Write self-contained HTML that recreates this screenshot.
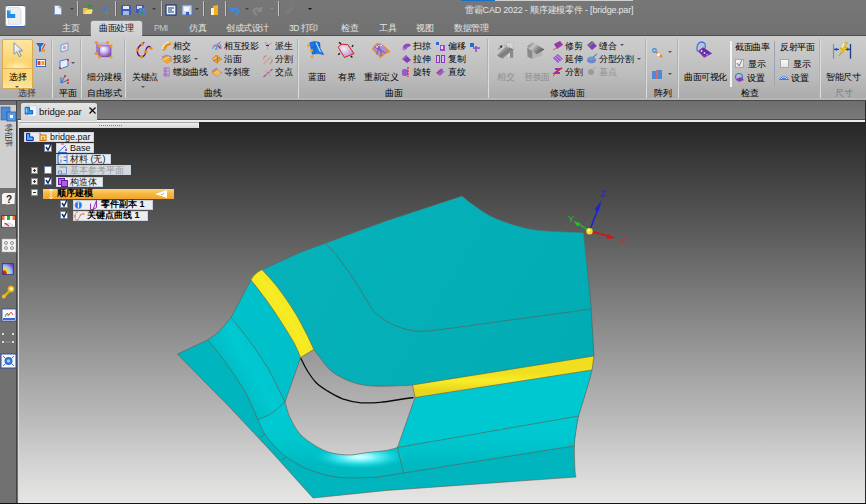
<!DOCTYPE html>
<html><head><meta charset="utf-8">
<style>
*{margin:0;padding:0;box-sizing:border-box}
html,body{width:866px;height:504px;overflow:hidden;background:#6e6e6e;font-family:"Liberation Sans",sans-serif}
.a{position:absolute}
svg{position:absolute;overflow:visible}
#title{left:0;top:0;width:866px;height:35px;background:linear-gradient(#777777,#717171)}
#ribbon{left:0;top:35px;width:866px;height:66px;background:linear-gradient(#cdcdcd,#c8c8c8 22%,#bcbcbc 62%,#acacac 96%,#b8b8b8 98%,#b8b8b8);border-top:1px solid #4e4e4e;border-bottom:1px solid #4a4a4a}
.tab{top:22px;font-size:8.5px;letter-spacing:-0.5px;color:#e4e4e4;line-height:12px;white-space:nowrap}
#seltab{left:90px;top:20px;width:53px;height:16px;background:linear-gradient(#dadada,#cfcfcf);border-radius:3px 3px 0 0;border:1px solid #858585;border-bottom:none}
.gl{top:88px;font-size:8.5px;letter-spacing:-0.5px;color:#3a3a3a;line-height:12px;white-space:nowrap}
.sep{top:39px;width:1px;height:59px;background:#b0b0b0;box-shadow:1px 0 0 #dcdcdc}
.t{font-size:8.5px;letter-spacing:-0.5px;color:#000;line-height:11px;white-space:nowrap;position:absolute}
.g{color:#8e8e8e}
.dd{position:absolute;width:0;height:0;border-left:2.5px solid transparent;border-right:2.5px solid transparent;border-top:2.5px solid #555}
.qs{position:absolute;top:1px;width:1px;height:15px;background:#c4c4c4;box-shadow:1px 0 0 rgba(90,90,90,0.5)}
#strip{left:0;top:101px;width:866px;height:18px;background:linear-gradient(#6e6e6e,#7a7a7a)}
#vp{left:18px;top:122px;width:847px;height:381px;background:linear-gradient(#262626 0%,#393939 10%,#585858 27%,#7a7a7a 45%,#9b9b9b 62%,#bcbcbc 79%,#d4d4d4 90%,#e6e6e4 100%)}
#ltb{left:0;top:101px;width:17px;height:402px;background:#717171;border-right:1px solid #444}
.ti{position:absolute;height:10px;background:rgba(250,252,255,0.92);border:1px solid #c8d2dc;font-size:8.5px;line-height:9px;color:#111;white-space:nowrap}
.cb{position:absolute;width:8px;height:8px;background:#fff;border:1px solid #6d84a8}
.pm{position:absolute;width:7px;height:7px;background:#f2f2f2;border:1px solid #8a8a8a}
</style></head><body>
<div id="title" class="a"></div>
<div class="a" style="left:461px;top:0;width:34px;height:1px;background:#1a72c8"></div><div class="a" style="left:495px;top:0;width:138px;height:1px;background:#d0d0d0"></div>
<!-- app button -->
<div class="a" style="left:5px;top:5px;width:21px;height:22px;background:#fff;border-radius:3px;border-top:1px solid #3a62b4;border-bottom:1px solid #3a62b4;border-left:1px solid #8aa0cc;border-right:1px solid #8aa0cc"></div>
<svg style="left:7px;top:7px" width="16" height="18"><path d="M1.3,0.5 h10.5 l2.2,2.2 v14.6 h-12.7 z" fill="#eceef4" stroke="#c8ccd6" stroke-width="0.6"/><path d="M0,3 h3.5 v4 h4.7 v4 H0 z" fill="#1a8ee8"/><path d="M0.5,3.5 h2.5 v3" fill="none" stroke="#9ad4ff" stroke-width="0.8"/></svg>
<!-- QAT -->
<svg style="left:54px;top:5px" width="8" height="10"><path d="M0.5,0.5 h4.5 l2.5,2.5 v6.5 h-7 z" fill="#eef3fc" stroke="#7a92c4" stroke-width="0.8"/><path d="M5,0.5 v2.5 h2.5" fill="#c8d4ec" stroke="#7a92c4" stroke-width="0.6"/></svg>
<div class="dd" style="left:70px;top:8px;border-left-width:2px;border-right-width:2px;border-top:2px solid #404040"></div>
<div class="qs" style="left:77px"></div>
<svg style="left:83px;top:4px" width="10" height="11"><path d="M0 4h4l1 1h4v5H0z" fill="#e8c040"/><path d="M1 10l2-4h7l-2 4z" fill="#f8e070"/><path d="M5 3q2-3 4 0" stroke="#2a9a2a" stroke-width="2" fill="none"/></svg>
<svg style="left:101px;top:6px" width="8" height="8"><circle cx="4" cy="3.5" r="2.5" fill="#4a7ac0"/><path d="M4 6l3 2" stroke="#888" stroke-width="1"/></svg>
<div class="qs" style="left:115px"></div>
<svg style="left:121px;top:5px" width="10" height="10"><rect x="0" y="0" width="10" height="10" rx="1" fill="#3a5ab8"/><rect x="2" y="1" width="6" height="3" fill="#e0e8f8"/><rect x="2" y="6" width="6" height="4" fill="#a8b8d8"/></svg>
<svg style="left:136px;top:5px" width="10" height="10"><rect x="0" y="0" width="8" height="8" fill="#3a5ab8"/><rect x="1" y="1" width="5" height="3" fill="#d0dcf0"/><rect x="3" y="3" width="7" height="7" fill="#5a7ac8"/><path d="M4 8l3-2v4z" fill="#2a9a2a"/></svg>
<div class="dd" style="left:152px;top:8px;border-top-color:#3a3a3a"></div>
<div class="qs" style="left:161px"></div>
<svg style="left:166px;top:5px" width="10" height="10"><rect x="0" y="0" width="10" height="10" fill="#f0f4fa" stroke="#1a3a7a" stroke-width="1.2"/><path d="M2 3h6M2 5h4M2 7h6" stroke="#1a3a7a" stroke-width="1"/></svg>
<svg style="left:182px;top:5px" width="10" height="10"><rect x="0" y="0" width="10" height="10" fill="#c8d8f0" stroke="#5a7ab8" stroke-width="1"/><rect x="2" y="2" width="5" height="4" fill="#f8f8f8"/><rect x="4" y="7" width="3" height="3" fill="#3a5ab8"/></svg>
<div class="dd" style="left:195px;top:8px;border-top-color:#3a3a3a"></div>
<div class="qs" style="left:203px"></div>
<svg style="left:210px;top:5px" width="9" height="10"><path d="M3 1l5-1v10l-5 0z" fill="#f0b020"/><path d="M1 3h3v7H1z" fill="#f8f0d0"/></svg>
<div class="qs" style="left:225px"></div>
<svg style="left:229px;top:5px" width="10" height="10"><path d="M2 2v4h4" stroke="#3a8ae0" stroke-width="2" fill="none"/><path d="M2 6q3-5 7-1q1 3-3 5" stroke="#3a8ae0" stroke-width="2" fill="none"/></svg>
<div class="dd" style="left:245px;top:8px;border-top-color:#444"></div>
<svg style="left:253px;top:5px" width="10" height="10"><path d="M8 2v4h-4" stroke="#8a8a8a" stroke-width="2" fill="none"/><path d="M8 6q-3-5-7-1q-1 3 3 5" stroke="#8a8a8a" stroke-width="2" fill="none"/></svg>
<div class="dd" style="left:270px;top:8px;border-top-color:#8a8a8a"></div>
<div class="qs" style="left:278px"></div>
<svg style="left:284px;top:5px" width="10" height="10"><path d="M2 9l6-8M4 9l5-6" stroke="#7c7c7c" stroke-width="1.5"/></svg>
<div class="dd" style="left:308px;top:8px;border-top-color:#111"></div>
<div class="a" style="left:465px;top:4px;font-size:9px;letter-spacing:-0.2px;color:#e6e6e6;line-height:12px;white-space:nowrap">雷霸CAD 2022 - 顺序建模零件 - [bridge.par]</div>
<!-- tabs -->
<div id="seltab" class="a"></div>
<div class="a tab" style="left:62px">主页</div>
<div class="a tab" style="left:99px;color:#111">曲面处理</div>
<div class="a tab" style="left:154px;color:#c8c8c8">PMI</div>
<div class="a tab" style="left:189px">仿真</div>
<div class="a tab" style="left:226px">创成式设计</div>
<div class="a tab" style="left:289px">3D 打印</div>
<div class="a tab" style="left:341px">检查</div>
<div class="a tab" style="left:379px">工具</div>
<div class="a tab" style="left:416px">视图</div>
<div class="a tab" style="left:454px">数据管理</div>
<div id="ribbon" class="a"></div>
<div class="a" style="left:91px;top:35px;width:51px;height:2px;background:#cecece"></div>
<!-- ribbon content -->
<div class="a" style="left:2px;top:39px;width:31px;height:50px;background:linear-gradient(#fde6a0,#fcd87c 35%,#fbd26a 50%,#fcd878 100%);border:1px solid #d9a94a;border-radius:2px"></div>
<div class="a" style="left:3px;top:52px;width:29px;height:16px;background:radial-gradient(ellipse 14px 8px at 50% 100%,rgba(255,246,200,0.9),rgba(255,240,180,0) 100%)"></div>
<div class="a" style="left:3px;top:69px;width:29px;height:19px;background:linear-gradient(#fcd878,#fcda80 60%,#fde6a2)"></div>
<div class="a" style="left:3px;top:68px;width:29px;height:1px;background:#e2b860"></div>
<svg style="left:13px;top:42px" width="11" height="16"><defs><linearGradient id="arw" x1="0" y1="0" x2="1" y2="1"><stop offset="0" stop-color="#ffffff"/><stop offset="1" stop-color="#c8d4e8"/></linearGradient></defs><path d="M1,0.8 v11.5 l2.8,-2.6 2.4,5 2,-1 -2.4,-4.8 h3.9 z" fill="url(#arw)" stroke="#7888a8" stroke-width="0.9"/></svg>
<div class="t" style="left:9px;top:72px">选择</div>
<div class="dd" style="left:15px;top:86px;border-top-color:#555"></div>
<div class="t gl a" style="left:18px;color:#3a3a3a">选择</div>
<svg style="left:36px;top:43px" width="10" height="10"><path d="M0 0h8l-3 4v4l-2 1V4z" fill="#2a6ac8"/><path d="M5 9l4-8" stroke="#d02020" stroke-width="1"/><rect x="5" y="6" width="4" height="3" fill="#f0a020"/></svg>
<svg style="left:36px;top:59px" width="10" height="8"><rect x="0.5" y="0.5" width="9" height="7" fill="#fff" stroke="#3a6ac8"/><rect x="1.5" y="2" width="3" height="4" fill="#e84030"/><rect x="5.5" y="2" width="3" height="4" fill="#f0a020"/></svg>
<div class="sep a" style="left:51px"></div>
<svg style="left:60px;top:43px" width="9" height="9"><path d="M1 2l7-2v7l-7 2z" fill="#dce8f8" stroke="#5a8ad8" stroke-width="0.8"/><rect x="3" y="3" width="3" height="3" fill="#e8a0a0"/></svg>
<svg style="left:59px;top:59px" width="10" height="10"><path d="M1 2l8-2v7l-8 3z" fill="#e8eef8" stroke="#4a7ad0" stroke-width="1"/><circle cx="1" cy="9" r="1" fill="#e02020"/><circle cx="9" cy="1" r="1" fill="#e02020"/></svg>
<div class="dd" style="left:71px;top:62px"></div>
<svg style="left:60px;top:75px" width="9" height="9"><path d="M1 8l7-3M1 8l4-7M1 8v-6" stroke="#3a6ac8" stroke-width="1"/><circle cx="8" cy="5" r="1" fill="#e02020"/><circle cx="5" cy="1" r="1" fill="#e02020"/><circle cx="8" cy="8" r="1" fill="#e02020"/></svg>
<div class="t gl a" style="left:59px">平面</div>
<div class="sep a" style="left:80px"></div>
<svg style="left:94px;top:40px" width="19" height="19"><defs><radialGradient id="cg" cx="0.35" cy="0.3" r="0.75"><stop offset="0" stop-color="#fff"/><stop offset="0.35" stop-color="#d8c8f0"/><stop offset="1" stop-color="#7a4ab8"/></radialGradient></defs><path d="M2.3,2.5 L13.5,2.5 L17,5.9 L5.4,5.9 Z" fill="#c4b0e4"/><path d="M2.3,2.5 L5.4,5.9 L5.4,16.8 L2,13.5 Z" fill="#9a78d0"/><rect x="5.4" y="5.9" width="11.6" height="10.9" fill="url(#cg)" stroke="#6a3aa8" stroke-width="0.6"/><g fill="#f5962a"><circle cx="2.3" cy="2.5" r="1.6"/><circle cx="13.5" cy="2.5" r="1.6"/><circle cx="5.4" cy="5.9" r="1.6"/><circle cx="17" cy="5.9" r="1.6"/><circle cx="2" cy="13.5" r="1.6"/><circle cx="5.4" cy="16.8" r="1.6"/><circle cx="17" cy="16.8" r="1.6"/></g></svg>
<div class="t" style="left:87px;top:72px">细分建模</div>
<div class="t gl a" style="left:87px">自由形式</div>
<div class="sep a" style="left:124px"></div>
<svg style="left:136px;top:42px" width="17" height="17"><path d="M8.3,0.3 Q7,1.2 6.2,2.2 Q2.5,4 1.4,8 Q0.8,13.5 5.3,14.8 Q9,14.8 9.8,9.6 Q10.2,4.8 13,4.3 Q14.5,4.6 15,6.2" stroke="#5a0a9a" stroke-width="1.3" fill="none"/><g fill="#f08a10"><circle cx="6.2" cy="2.2" r="1.6"/><circle cx="1.3" cy="7.9" r="1.6"/><circle cx="5.3" cy="14.8" r="1.6"/><circle cx="9.8" cy="9.6" r="1.6"/><circle cx="15" cy="6.2" r="1.6"/></g></svg>
<div class="t" style="left:132px;top:72px">关键点</div>
<div class="dd" style="left:141px;top:86px"></div>
<svg style="left:161px;top:41px" width="11" height="10"><path d="M1,8.5 Q2.5,1.5 9,0.8 L10.5,3.5 Q6,3.5 4,9.5 Z" fill="#f5a020" stroke="#e08010" stroke-width="0.5"/><path d="M1.2,8 Q2.5,2 8.5,1" stroke="#f0f8ff" stroke-width="1.2" fill="none"/><path d="M3,7 Q5,4 9,3" stroke="#d06010" stroke-width="0.5" fill="none"/></svg>
<div class="t" style="left:173px;top:41px">相交</div>
<svg style="left:161px;top:54px" width="12" height="10"><path d="M0.5,5 L5,2 L11,5.5 L6,9.5 Z" fill="#f5a828" stroke="#d88010" stroke-width="0.5"/><path d="M2,6 L8,3" stroke="#fce080" stroke-width="1"/><path d="M1,3 Q5,0 10,2.5" stroke="#9a5ad0" stroke-width="0.8" fill="none"/><path d="M10,2 v6" stroke="#888" stroke-width="0.6"/></svg>
<div class="t" style="left:173px;top:54px">投影</div>
<div class="dd" style="left:194px;top:58px"></div>
<svg style="left:163px;top:67px" width="8" height="10"><path d="M1,1 h5.5 M1,1 Q5,2.5 1,4 h5.5 M1,4 Q5,5.5 1,7 h5.5 M1,7 Q5,8.5 1,9 h5.5" stroke="#a868d8" stroke-width="1.1" fill="none"/><path d="M0.8,1 v8 M6.5,1 v8" stroke="#b078e0" stroke-width="0.7"/></svg>
<div class="t" style="left:173px;top:67px">螺旋曲线</div>
<svg style="left:212px;top:41px" width="10" height="10"><path d="M0.5,8 Q1.5,3 4,4 Q5,6 3.5,9" stroke="#4a8ae0" stroke-width="0.9" fill="none"/><path d="M5,9 Q4.5,3 7,2 Q9.5,3 9,8" stroke="#4a8ae0" stroke-width="0.9" fill="none"/><path d="M1,6 L9,0.5" stroke="#9a5ad0" stroke-width="0.6"/><path d="M6,4.5 L8.5,7.5" stroke="#e02030" stroke-width="1.3"/></svg>
<div class="t" style="left:224px;top:41px">相互投影</div>
<svg style="left:211px;top:54px" width="12" height="10"><path d="M1,5 L5,1 L9,4 L11,5 L9,6 L6,9.5 Z" fill="#f5a020" stroke="#d07010" stroke-width="0.5"/><path d="M2.5,5.5 L8,3" stroke="#fce8a0" stroke-width="0.9"/><path d="M2,7 L9,3 M6.5,1.5 v7" stroke="#8a4ac8" stroke-width="0.7"/></svg>
<div class="t" style="left:224px;top:54px">沿面</div>
<svg style="left:211px;top:67px" width="12" height="10"><path d="M1,5.5 L6,2 L11,6 L6,9.5 Z" fill="#f0a830" stroke="#c87010" stroke-width="0.5"/><path d="M3,6.5 L7.5,3.5 M4.5,7.5 L9,4.5" stroke="#fce0a0" stroke-width="0.8"/><path d="M1,4.5 L6,1" stroke="#9a5ad0" stroke-width="0.9"/><path d="M5,9 L10,6.5" stroke="#a8c8f0" stroke-width="1"/></svg>
<div class="t" style="left:224px;top:67px">等斜度</div>
<svg style="left:264px;top:41px" width="10" height="10"><path d="M1,1 Q3,2 3.5,4 M4,4 L8,2 M4,4 L3.5,9" stroke="#b090d0" stroke-width="0.9" fill="none"/><circle cx="1.8" cy="2.5" r="1.1" fill="#f0a030"/><path d="M2,4.5 h3" stroke="#222" stroke-width="0.9"/></svg>
<div class="t" style="left:275px;top:41px">派生</div>
<svg style="left:263px;top:55px" width="10" height="10"><path d="M1,8.5 L8,1.5" stroke="#e84848" stroke-width="0.9" stroke-dasharray="1 0.6"/><path d="M0.5,3 Q1,1 3,0.8 M7.5,8.5 Q9.5,7 9,4.5" stroke="#9a5ad0" stroke-width="0.8" fill="none"/><g fill="#f0a030"><circle cx="0.8" cy="3.5" r="0.9"/><circle cx="3" cy="0.8" r="0.9"/><circle cx="9" cy="4.5" r="0.9"/><circle cx="7" cy="8.7" r="0.9"/></g></svg>
<div class="t" style="left:275px;top:54px">分割</div>
<svg style="left:263px;top:68px" width="10" height="10"><path d="M0.5,9 L9.5,1" stroke="#9a50d0" stroke-width="1.1"/><path d="M2,3 L8,8.5" stroke="#9a9a9a" stroke-width="0.6"/><circle cx="4" cy="6.3" r="1" fill="#f0a030"/><circle cx="7" cy="3.5" r="1" fill="#f0a030"/></svg>
<div class="t" style="left:275px;top:67px">交点</div>
<div class="t gl a" style="left:204px">曲线</div>
<div class="sep a" style="left:297px"></div>
<svg style="left:306px;top:40px" width="19" height="19"><path d="M3.7,2.8 Q8.5,0.5 13.7,2.5 L14.2,8.5 Q16,12 17.8,14.7 Q12,12.5 6.3,14.2 L5.1,9 Z" fill="#1a7ae8" stroke="#0a4ab0" stroke-width="0.5"/><path d="M5,8 Q10,6 14,5 M8.5,2 Q10,8 8.5,13.5" stroke="#0a50c0" stroke-width="0.6" fill="none"/><path d="M10,2.5 L14.5,12" stroke="#c0e8ff" stroke-width="1.1"/><g fill="#f0a030"><circle cx="2.5" cy="5.4" r="1.5"/><circle cx="5.4" cy="10.6" r="1.5"/><circle cx="6.1" cy="16.8" r="1.5"/></g></svg>
<div class="t" style="left:308px;top:72px">蓝面</div>
<svg style="left:336px;top:40px" width="20" height="20"><defs><radialGradient id="bg1" cx="0.35" cy="0.35" r="0.7"><stop offset="0" stop-color="#f4ecf8"/><stop offset="1" stop-color="#b090cc"/></radialGradient></defs><path d="M2.3,7.3 Q4,4.5 6.1,4.2 L11.9,4.7 Q15,9 18,13.7 Q13,15.5 8.5,17.5 Q5,12 2.3,7.3 Z" fill="url(#bg1)" stroke="#e81818" stroke-width="1"/><path d="M3,2.3 L5,4 M17.3,5.1 L15.9,6.8 M2.3,14.7 L3.8,13.2 M14.7,15.9 L16.4,17.5" stroke="#111" stroke-width="1.3"/></svg>
<div class="t" style="left:338px;top:72px">有界</div>
<svg style="left:370px;top:40px" width="20" height="19"><path d="M2.6,9 Q5,4 8,3.5 Q12,3.5 19.5,11.6 Q14,13 10.4,17.3 Z" fill="#a890d4" stroke="#f5891f" stroke-width="1.2"/><path d="M6,7.5 Q9,5 12,5.5" stroke="#eee6fa" stroke-width="1.2" fill="none"/><path d="M4.5,7 L15.5,13 M10,4.5 L6.5,14.5 M7,5 Q12,9 11,16" stroke="#4a38b8" stroke-width="0.6" fill="none"/></svg>
<div class="t" style="left:364px;top:72px">重新定义</div>
<svg style="left:402px;top:43px" width="9" height="8"><path d="M1 6q0-5 5-5q3 0 2 2q-3 0-4 3z" fill="#9a4ac8" stroke="#6a2a9a" stroke-width="0.6"/><circle cx="2" cy="6" r="1.5" fill="#c070e0"/></svg>
<div class="t" style="left:413px;top:41px">扫掠</div>
<svg style="left:402px;top:55px" width="9" height="8"><path d="M0 4l4-4 5 5-4 3z" fill="#8a3ab8"/><path d="M1 4l4-3" stroke="#c080e0" stroke-width="0.8"/></svg>
<div class="t" style="left:413px;top:54px">拉伸</div>
<svg style="left:402px;top:67px" width="9" height="10"><rect x="0" y="2" width="6" height="7" rx="2" fill="#9a5ac8"/><path d="M6 0v10" stroke="#e02020" stroke-width="1.2" stroke-dasharray="2 1"/></svg>
<div class="t" style="left:413px;top:67px">旋转</div>
<svg style="left:436px;top:42px" width="9" height="9"><rect x="0" y="0" width="3" height="3" fill="#2a6ad0"/><rect x="4" y="3" width="5" height="6" fill="#9a4ac8"/><rect x="5" y="4" width="2" height="3" fill="#e8d8f8"/></svg>
<div class="t" style="left:448px;top:41px">偏移</div>
<svg style="left:436px;top:55px" width="10" height="8"><rect x="0" y="0" width="4" height="8" fill="#8a3ab8"/><rect x="5" y="0" width="4" height="8" fill="#8a3ab8"/><rect x="1" y="1" width="2" height="6" fill="#d8c0f0"/><rect x="6" y="1" width="2" height="6" fill="#d8c0f0"/></svg>
<div class="t" style="left:448px;top:54px">复制</div>
<svg style="left:436px;top:68px" width="9" height="8"><path d="M0 5l5-5 4 3-5 5z" fill="#9a5ac8"/><path d="M5 0l4 3" stroke="#9ac8f8" stroke-width="2"/><path d="M1 5l6-4" stroke="#e02040" stroke-width="1"/></svg>
<div class="t" style="left:448px;top:67px">直纹</div>
<svg style="left:470px;top:43px" width="10" height="9"><rect x="0" y="0" width="4" height="4" fill="#2a6ad0"/><path d="M3 5h7M6 3v6" stroke="#8a4ac8" stroke-width="1.5"/></svg>
<div class="t gl a" style="left:385px">曲面</div>
<div class="sep a" style="left:487px"></div>
<svg style="left:494px;top:40px" width="22" height="21"><defs><linearGradient id="gr1" x1="0" y1="0" x2="1" y2="1"><stop offset="0" stop-color="#d8d8d8"/><stop offset="0.5" stop-color="#7a7a7a"/><stop offset="1" stop-color="#b8b8b8"/></linearGradient></defs><rect x="12.3" y="2.2" width="6.8" height="15.5" fill="#d4d4d4" stroke="#b0b0b0" stroke-width="0.5"/><rect x="16" y="9" width="3" height="8.7" fill="#8a8a8a"/><path d="M2.9,15.5 L11.6,6.4 L19.7,9.6 L8.4,18.7 Z" fill="url(#gr1)"/><path d="M10,5 L19.5,9.5" stroke="#666" stroke-width="0.6" stroke-dasharray="1 1"/><path d="M4.2,9.6 L7.8,6.1" stroke="#555" stroke-width="0.8"/><path d="M8.5,5.2 L5.5,6 L7.6,8.2 Z" fill="#333"/></svg>
<div class="t g" style="left:497px;top:72px">相交</div>
<svg style="left:525px;top:40px" width="22" height="21"><defs><linearGradient id="gr2" x1="0" y1="0" x2="1" y2="0.6"><stop offset="0" stop-color="#505050"/><stop offset="0.4" stop-color="#c8c8c8"/><stop offset="0.7" stop-color="#888"/><stop offset="1" stop-color="#5a5a5a"/></linearGradient></defs><path d="M2.3,7.7 L2.6,16.8 L7.2,18.7 L17.2,15.5 L17.2,10.3 L11.7,14.2 Z" fill="#b4b4b4"/><path d="M2.3,7.7 L2.6,16.8 L7.2,18.7 L7.2,11 Z" fill="#8a8a8a"/><path d="M2,6.4 L7.8,2.2 L19.5,9.6 L11.7,14.2 Z" fill="url(#gr2)"/></svg>
<div class="t g" style="left:524px;top:72px">替换面</div>
<svg style="left:553px;top:41px" width="10" height="9"><path d="M1 3l6-3 3 4-6 4z" fill="#8a3ab8"/><path d="M0 9l10-6" stroke="#e04040" stroke-width="0.8"/></svg>
<div class="t" style="left:565px;top:41px">修剪</div>
<svg style="left:553px;top:54px" width="10" height="9"><path d="M0 4l5-4 5 5-5 4z" fill="#9a5ac8"/><path d="M2 3l5 5M4 2l5 4" stroke="#e0d0f0" stroke-width="0.6"/></svg>
<div class="t" style="left:565px;top:54px">延伸</div>
<svg style="left:553px;top:67px" width="9" height="10"><path d="M2 2l5 0-5 4h5" stroke="#8a3ab8" stroke-width="2" fill="none"/><path d="M0 9l9-9" stroke="#e02020" stroke-width="0.8"/></svg>
<div class="t" style="left:565px;top:67px">分割</div>
<svg style="left:587px;top:41px" width="10" height="9"><path d="M0 4l5-4 5 5-5 4z" fill="#8a3ab8"/><path d="M2 5l5-4" stroke="#30c030" stroke-width="1.2"/></svg>
<div class="t" style="left:599px;top:41px">缝合</div>
<div class="dd" style="left:620px;top:44px"></div>
<svg style="left:587px;top:54px" width="10" height="10"><ellipse cx="4.5" cy="6" rx="4.5" ry="3.5" fill="#5aa0e0"/><path d="M0 6q4 3 9 0" stroke="#e04060" stroke-width="0.8" fill="none"/><path d="M6 3l4-3" stroke="#3a6ad0" stroke-width="1"/></svg>
<div class="t" style="left:599px;top:54px">分型分割</div>
<div class="dd" style="left:637px;top:58px"></div>
<svg style="left:587px;top:67px" width="9" height="9"><circle cx="4" cy="5" r="3" fill="#9a9a9a"/><path d="M5 3l4-3" stroke="#aaa" stroke-width="1"/></svg>
<div class="t g" style="left:599px;top:67px">基点</div>
<div class="t gl a" style="left:550px">修改曲面</div>
<div class="sep a" style="left:645px"></div>
<svg style="left:652px;top:48px" width="11" height="10"><circle cx="2.5" cy="2.5" r="1.8" fill="none" stroke="#3a8ae0" stroke-width="1.2"/><path d="M4 4l6 5" stroke="#f08020" stroke-width="2.2"/><circle cx="6.5" cy="6.5" r="1.5" fill="#fff"/></svg>
<div class="dd" style="left:668px;top:51px"></div>
<svg style="left:652px;top:70px" width="11" height="9"><rect x="0" y="1" width="4" height="8" fill="#4a8ad8"/><rect x="6" y="0" width="4" height="9" fill="#4a8ad8"/><path d="M5 0v9" stroke="#e02020" stroke-width="1"/></svg>
<div class="dd" style="left:668px;top:73px"></div>
<div class="t gl a" style="left:654px">阵列</div>
<div class="sep a" style="left:677px"></div>
<svg style="left:694px;top:40px" width="20" height="20"><path d="M3.3,11.5 Q1.8,3 7.5,2 Q12.5,2.2 11,8.5" stroke="#3a78f0" stroke-width="1.3" fill="none"/><path d="M6,8.5 Q5.5,5 8,4.8 Q10,5 9.2,8" stroke="#8ab0f8" stroke-width="0.8" fill="none"/><path d="M3.7,10.9 L9,7.3 L18.3,13.5 L10.1,17.8 Z" fill="#7a3ab8"/><path d="M5.5,12 L11,8.5 M7.5,13.5 L13,10 M9,15.5 L15,11.5 M6,10 L13,15.8 M8.5,8.5 L15.5,13.5" stroke="#4a1a90" stroke-width="0.6"/><circle cx="7.5" cy="11" r="0.9" fill="#f0e0ff"/><circle cx="10.5" cy="13" r="0.9" fill="#e8d0ff"/><circle cx="13" cy="14.8" r="0.7" fill="#e0c8f8"/></svg>
<div class="t" style="left:684px;top:72px">曲面可视化</div>
<div class="a" style="left:730px;top:41px;width:2px;height:46px;background:#f4f4f4"></div>
<div class="t" style="left:735px;top:42px">截面曲率</div>
<div class="a" style="left:735px;top:59px;width:9px;height:9px;background:linear-gradient(#f8f8f8,#e0e0e0);border:1px solid #a8a8a8"></div>
<svg style="left:736px;top:60px" width="7" height="7"><path d="M1 3l2 3 3-6" stroke="#555" stroke-width="0.8" fill="none"/></svg>
<div class="t" style="left:748px;top:59px">显示</div>
<svg style="left:735px;top:73px" width="9" height="9"><circle cx="4" cy="4" r="3.5" fill="none" stroke="#3a7ae0" stroke-width="1.2"/><path d="M1 6l5-2 3 3-5 2z" fill="#8a3ab8"/></svg>
<div class="t" style="left:747px;top:73px">设置</div>
<div class="a" style="left:774px;top:41px;width:1px;height:45px;background:#9aa4b4"></div>
<div class="t" style="left:780px;top:42px">反射平面</div>
<div class="a" style="left:780px;top:59px;width:9px;height:9px;background:linear-gradient(#fafafa,#e4e4e4);border:1px solid #a8a8a8"></div>
<div class="t" style="left:793px;top:59px">显示</div>
<svg style="left:779px;top:74px" width="10" height="7"><path d="M0 6q5-8 10 0z" fill="#3a7ae0"/><path d="M2 5q3-4 6 0" stroke="#fff" stroke-width="0.8" fill="none"/></svg>
<div class="t" style="left:791px;top:73px">设置</div>
<div class="t gl a" style="left:741px">检查</div>
<div class="sep a" style="left:819px"></div>
<svg style="left:830px;top:40px" width="24" height="20"><path d="M3.5,4 v14.7" stroke="#7890c0" stroke-width="1.2"/><path d="M20.5,4 v14.7" stroke="#1a3a90" stroke-width="1.3"/><path d="M4,9.4 h5 M20,9.4 h-5" stroke="#1a4aa8" stroke-width="1.1"/><path d="M4.2,9.4 l2.6,-1.6 v3.2 z M19.8,9.4 l-2.6,-1.6 v3.2 z" fill="#1a4aa8"/><path d="M16,2 L10.2,8.8 L13,9.2 L9,16 L17.5,7.6 L14.5,7.3 L17.8,2.8 Z" fill="#f4cc10" stroke="#b89000" stroke-width="0.5"/><path d="M14.2,3.6 L11.8,7.6" stroke="#fffbe0" stroke-width="1.1"/></svg>
<div class="t" style="left:826px;top:72px">智能尺寸</div>
<div class="t gl a" style="left:835px;color:#7a7a7a">尺寸</div>
<!-- lower area -->
<div id="strip" class="a"></div>
<div class="a" style="left:0;top:119px;width:866px;height:1px;background:#474747"></div>
<div class="a" style="left:18px;top:120px;width:848px;height:2px;background:#ececec"></div>
<div class="a" style="left:21px;top:103px;width:76px;height:18px;background:linear-gradient(#e4e4e4,#d6d6d6);border-radius:2px 2px 0 0"></div>
<svg style="left:24px;top:105px" width="14" height="13"><rect x="3.5" y="1" width="9" height="10.6" fill="#f2f4f8" stroke="#c4c8d0" stroke-width="0.6"/><path d="M1.2,2.3 h4.3 v3.3 h3.2 v3.4 H1.2 z" fill="#2a9af0" stroke="#0a5ab0" stroke-width="0.9"/><path d="M2.3,3.5 v4" stroke="#a8dcff" stroke-width="1"/></svg>
<div class="a" style="left:39px;top:105px;font-size:9.5px;line-height:13px;color:#111;white-space:nowrap">bridge.par</div>
<svg style="left:89px;top:107px" width="7" height="7"><path d="M0.5 0.5l6 6M6.5 0.5l-6 6" stroke="#111" stroke-width="1.3"/></svg>
<div id="vp" class="a"></div>
<div id="ltb" class="a"></div>
<div class="a" style="left:18px;top:122px;width:1px;height:381px;background:#dcdcdc"></div>
<div class="a" style="left:19px;top:122px;width:2px;height:6px;background:#dcdcdc"></div>
<div class="a" style="left:865px;top:101px;width:1px;height:403px;background:#2a2a2a"></div>
<div class="a" style="left:18px;top:502px;width:847px;height:1px;background:#eaeaea"></div><div class="a" style="left:0;top:503px;width:866px;height:1px;background:#111"></div>
<!-- left toolbar panel -->
<div class="a" style="left:0;top:105px;width:16px;height:83px;background:#cfcfcf"></div>
<svg style="left:1px;top:107px" width="16" height="15"><rect x="0" y="0" width="9" height="13" fill="#4a8ad8" stroke="#2a5aa8" stroke-width="0.6"/><rect x="6" y="5" width="9" height="9" fill="#5a9ae0" stroke="#2a5aa8" stroke-width="0.8"/><rect x="9" y="8" width="3" height="3" fill="#fff"/></svg>
<div class="a" style="left:3px;top:124px;width:11px;height:26px;font-size:8px;line-height:11px;color:#222;writing-mode:vertical-rl;text-orientation:sideways;letter-spacing:-0.3px">特征库</div>
<svg style="left:1px;top:192px" width="15" height="14"><path d="M1,2.5 L3,1 L13,1 L14,0.5 L13.5,12 H1 Z" fill="#f4f4f4"/><text x="5" y="11" font-size="10" font-weight="bold" fill="#222" font-family="Liberation Sans">?</text><path d="M5,12.5 h4" stroke="#bbb" stroke-width="0.6"/></svg>
<svg style="left:1px;top:215px" width="15" height="13"><rect x="0.5" y="0.5" width="14" height="12" fill="#fff" stroke="#2a4aa8" stroke-width="1"/><rect x="1" y="1" width="2.5" height="4" fill="#f07030"/><rect x="6" y="1" width="3" height="4" fill="#20b030"/><rect x="11.5" y="1" width="2.5" height="4" fill="#f07030"/><path d="M1.5,12 Q7.5,4 13.5,12 Z" fill="#e8f0f8" stroke="#9ab0d0" stroke-width="0.5"/><path d="M3.5,8 L8,11" stroke="#e02020" stroke-width="1.1"/></svg>
<svg style="left:2px;top:239px" width="14" height="13"><rect x="0" y="0" width="14" height="13" fill="#f4f4f4" stroke="#aaa" stroke-width="0.5"/><g fill="none" stroke="#777" stroke-width="0.8"><circle cx="4" cy="4" r="1.5"/><circle cx="10" cy="4" r="1.5"/><circle cx="4" cy="9" r="1.5"/><circle cx="10" cy="9" r="1.5"/></g></svg>
<svg style="left:2px;top:263px" width="12" height="12"><defs><radialGradient id="sp" cx="0.1" cy="0.9" r="1.2"><stop offset="0" stop-color="#e01010"/><stop offset="0.18" stop-color="#f02010"/><stop offset="0.3" stop-color="#f8e020"/><stop offset="0.55" stop-color="#a0c8f0"/><stop offset="0.8" stop-color="#7a60d0"/><stop offset="1" stop-color="#5a30b0"/></radialGradient></defs><rect x="0.5" y="0.5" width="11" height="11" fill="url(#sp)" stroke="#2a3a98" stroke-width="0.8"/></svg>
<svg style="left:1px;top:285px" width="14" height="14"><path d="M3,11.5 L10,4.5" stroke="#e8b010" stroke-width="2.4"/><circle cx="10" cy="4" r="3.2" fill="#f4c420" stroke="#c89000" stroke-width="0.5"/><circle cx="10.3" cy="3.7" r="1.5" fill="#fff8d0"/><circle cx="2.8" cy="11.5" r="1.9" fill="#f0c020"/></svg>
<svg style="left:2px;top:309px" width="14" height="12"><rect x="0" y="0" width="14" height="12" fill="#f8f8ff" stroke="#2a4aa8" stroke-width="0.8"/><rect x="1" y="9" width="12" height="2" fill="#3a6ad0"/><path d="M3 8q2-6 4-2q2-5 4 0" stroke="#e02020" stroke-width="0.8" fill="none"/><path d="M4 5l3 2" stroke="#20a020" stroke-width="0.8"/></svg>
<svg style="left:1px;top:332px" width="15" height="13"><g fill="#d8d8d8"><rect x="1" y="1" width="2" height="2"/><rect x="11" y="1" width="2" height="2"/><rect x="1" y="9" width="2" height="2"/><rect x="11" y="9" width="2" height="2"/></g><path d="M4 10h6" stroke="#bbb" stroke-width="0.5"/></svg>
<svg style="left:1px;top:354px" width="15" height="14"><rect x="0" y="0" width="15" height="14" fill="#f8f8ff" stroke="#2a4aa8" stroke-width="1"/><circle cx="7.5" cy="7" r="4" fill="#2a70d8"/><circle cx="7.5" cy="7" r="1.8" fill="#9ad0ff"/><path d="M2 2l2 2M13 2l-2 2M2 12l2-2M13 12l-2-2" stroke="#2a4aa8" stroke-width="0.8"/></svg>
<!-- tree -->
<div class="a" style="left:19px;top:122px;width:180px;height:1px;background:#a8a8a8"></div><div class="a" style="left:21px;top:123px;width:178px;height:5px;background:linear-gradient(#eeeeee,#d6d6d6);border-right:1px solid #f0f0f0"></div>
<div class="a" style="left:99px;top:125px;width:23px;height:1px;border-top:1px dotted #6a80a8"></div>
<div class="a" style="left:0;top:1px;width:866px;height:0">
<div class="ti" style="left:24px;top:131px;width:70px"></div>
<svg style="left:25px;top:131px" width="24" height="10"><path d="M1.5,1.5 h3.2 v3.5 h3.5 v3.5 H1.5 z" fill="#40b8f8" stroke="#1a22a8" stroke-width="1"/><rect x="15" y="3" width="6" height="5.5" fill="#f8e060" stroke="#d86a10" stroke-width="1"/><path d="M14.5,1 l1.5,1.5" stroke="#c02020" stroke-width="1"/><rect x="17.5" y="5" width="1" height="3" fill="#5a6a8a"/></svg>
<div class="a" style="left:50px;top:131px;font-size:9px;line-height:11px;color:#111;white-space:nowrap">bridge.par</div>
<div class="cb" style="left:44px;top:143px"></div>
<svg style="left:45px;top:143px" width="7" height="7"><path d="M1 3l2 3 3-6" stroke="#1a2a5a" stroke-width="1.5" fill="none"/></svg>
<div class="ti" style="left:56px;top:142px;width:38px"></div>
<svg style="left:57px;top:142px" width="11" height="11"><path d="M1,9.5 h9" stroke="#2a6ad0" stroke-width="1.1"/><path d="M1,9.5 L8.5,2.5" stroke="#2a6ad0" stroke-width="1"/><path d="M4,1 h3 M8,4 l1.5,1.5" stroke="#d040c0" stroke-width="1"/><rect x="8" y="6" width="2" height="2" fill="#c040b0"/></svg>
<div class="a" style="left:70px;top:142px;font-size:9px;line-height:11px;color:#111;white-space:nowrap">Base</div>
<div class="ti" style="left:56px;top:153px;width:55px"></div>
<svg style="left:57px;top:153px" width="11" height="10"><path d="M2.5,0.8 h-1.5 v8.4 h1.5" stroke="#1a5ab8" stroke-width="1" fill="none"/><path d="M4,2 l1,1.5 h-2 z" fill="#f09020"/><path d="M4,5.5 v3" stroke="#3a7ad8" stroke-width="1"/><path d="M6.5,3 h3 M6.5,6.5 h3" stroke="#2a6ad0" stroke-width="1"/><path d="M10,0.8 v8.4" stroke="#1a5ab8" stroke-width="0.8"/></svg>
<div class="a" style="left:70px;top:153px;font-size:9px;line-height:11px;color:#111;white-space:nowrap">材料 (无)</div>
<div class="pm" style="left:31px;top:166px"></div>
<div class="a" style="left:33px;top:169px;width:3px;height:1px;background:#333"></div>
<div class="a" style="left:34px;top:168px;width:1px;height:3px;background:#333"></div>
<div class="cb" style="left:44px;top:165px"></div>
<div class="ti" style="left:56px;top:164px;width:75px;background:rgba(240,244,248,0.85)"></div>
<svg style="left:57px;top:165px" width="11" height="9"><path d="M1.5,5 v3 h8 v-7 h-7" stroke="#6a8ad8" stroke-width="0.9" fill="none"/><path d="M1,5 h3.5 v3" stroke="#6a8ad8" stroke-width="0.9" fill="none"/></svg>
<div class="a" style="left:70px;top:164px;font-size:9px;line-height:11px;color:#9a9a9a;white-space:nowrap">基本参考平面</div>
<div class="pm" style="left:31px;top:177px"></div>
<div class="a" style="left:33px;top:180px;width:3px;height:1px;background:#333"></div>
<div class="a" style="left:34px;top:179px;width:1px;height:3px;background:#333"></div>
<div class="cb" style="left:44px;top:176px"></div>
<svg style="left:45px;top:176px" width="7" height="7"><path d="M1 3l2 3 3-6" stroke="#1a2a5a" stroke-width="1.5" fill="none"/></svg>
<div class="ti" style="left:56px;top:176px;width:47px"></div>
<svg style="left:58px;top:177px" width="10" height="9"><rect x="0.5" y="0.5" width="6" height="6" fill="#c070e0" stroke="#6a1aa8"/><rect x="3.5" y="2.5" width="6" height="6" fill="#b060d8" stroke="#6a1aa8"/></svg>
<div class="a" style="left:70px;top:176px;font-size:9px;line-height:11px;color:#111;white-space:nowrap">构造体</div>
<div class="pm" style="left:31px;top:188px"></div>
<div class="a" style="left:33px;top:191px;width:3px;height:1px;background:#333"></div>
<div class="a" style="left:43px;top:188px;width:131px;height:10px;background:linear-gradient(#fcd27a,#f8b840 45%,#f2a42a)"></div>
<svg style="left:48px;top:188px" width="6" height="10"><path d="M3 0v10M1 2l2-2 2 2M1 8l2 2 2-2" stroke="#fff" stroke-width="0.8" fill="none"/></svg>
<div class="a" style="left:57px;top:187px;font-size:9px;line-height:11px;color:#000;font-weight:bold;white-space:nowrap">顺序建模</div>
<svg style="left:155px;top:189px" width="12" height="8"><path d="M0 4l12-4v8z" fill="#fff"/><path d="M6 4l1 1 2-2" stroke="#888" stroke-width="0.6" fill="none"/></svg>
<div class="cb" style="left:60px;top:199px"></div>
<svg style="left:61px;top:199px" width="7" height="7"><path d="M1 3l2 3 3-6" stroke="#1a2a5a" stroke-width="1.5" fill="none"/></svg>
<div class="ti" style="left:73px;top:199px;width:80px"></div>
<svg style="left:74px;top:199px" width="24" height="11"><circle cx="4.4" cy="5.2" r="3.6" fill="#1a78f0" stroke="#c8c8c8" stroke-width="0.5"/><rect x="3.8" y="4.2" width="1.3" height="3.5" fill="#fff"/><circle cx="4.45" cy="2.9" r="0.8" fill="#fff"/><path d="M16.5,3.5 v6 h2.5 l3.5,-9 v7 l-3.5,2" stroke="#8a20b0" stroke-width="0.9" fill="#e8e8ec"/></svg>
<div class="a" style="left:101px;top:198px;font-size:9px;line-height:11px;color:#000;font-weight:bold;white-space:nowrap">零件副本 1</div>
<div class="cb" style="left:60px;top:210px"></div>
<svg style="left:61px;top:210px" width="7" height="7"><path d="M1 3l2 3 3-6" stroke="#1a2a5a" stroke-width="1.5" fill="none"/></svg>
<div class="ti" style="left:73px;top:210px;width:75px"></div>
<svg style="left:74px;top:210px" width="11" height="11"><path d="M3,1 Q0,4 1.5,8 Q2.5,10 4,9 Q6,5 7,3.5 Q8,2.5 10,3" stroke="#8a40c0" stroke-width="0.9" fill="none" stroke-dasharray="1.2 0.6"/><g fill="#f09030"><circle cx="3" cy="1.2" r="0.9"/><circle cx="1" cy="5" r="0.9"/><circle cx="3.5" cy="9.2" r="0.9"/><circle cx="6.5" cy="4" r="0.9"/><circle cx="9.8" cy="3" r="0.9"/></g></svg>
<div class="a" style="left:87px;top:209px;font-size:9px;line-height:11px;color:#000;font-weight:bold;white-space:nowrap">关键点曲线 1</div>
</div>
<!-- model -->
<svg style="left:0;top:0" width="866" height="504" viewBox="0 0 866 504">
<defs>
<linearGradient id="holeg" gradientUnits="userSpaceOnUse" x1="0" y1="122" x2="0" y2="503"><stop offset="0" stop-color="#262626"/><stop offset="0.10" stop-color="#393939"/><stop offset="0.27" stop-color="#585858"/><stop offset="0.45" stop-color="#7a7a7a"/><stop offset="0.62" stop-color="#9b9b9b"/><stop offset="0.79" stop-color="#bcbcbc"/><stop offset="0.90" stop-color="#d4d4d4"/><stop offset="1" stop-color="#e6e6e4"/></linearGradient>
<linearGradient id="topf" gradientUnits="userSpaceOnUse" x1="300" y1="220" x2="560" y2="380"><stop offset="0" stop-color="#06b2ba"/><stop offset="1" stop-color="#02acb4"/></linearGradient>
<linearGradient id="bandB" gradientUnits="userSpaceOnUse" x1="222" y1="368" x2="262" y2="345"><stop offset="0" stop-color="#00bac2"/><stop offset="0.55" stop-color="#00c9d1"/><stop offset="1" stop-color="#00c3cb"/></linearGradient>
<linearGradient id="yel" gradientUnits="userSpaceOnUse" x1="268" y1="318" x2="292" y2="305"><stop offset="0" stop-color="#eee21e"/><stop offset="0.55" stop-color="#faf02a"/><stop offset="1" stop-color="#ecdc1e"/></linearGradient>
<linearGradient id="yel2" gradientUnits="userSpaceOnUse" x1="0" y1="372" x2="0" y2="390"><stop offset="0" stop-color="#efdf1f"/><stop offset="0.5" stop-color="#f8ec28"/><stop offset="1" stop-color="#e8d61e"/></linearGradient>
<linearGradient id="tube" gradientUnits="userSpaceOnUse" x1="0" y1="428" x2="0" y2="464"><stop offset="0" stop-color="#00c9d1"/><stop offset="0.5" stop-color="#00c4cc"/><stop offset="1" stop-color="#00b9c1"/></linearGradient>
<radialGradient id="hl" cx="0.5" cy="0.5" r="0.5"><stop offset="0" stop-color="#e0ffff"/><stop offset="0.25" stop-color="#90f8fe"/><stop offset="0.6" stop-color="#30e0e8" stop-opacity="0.8"/><stop offset="1" stop-color="#00c8d0" stop-opacity="0"/></radialGradient>

<clipPath id="tubeclip"><path d="M258,420 C260.3,418.8 267.5,416.0 272.0,413.0 C276.5,410.0 282.8,403.8 285.0,402.0 C285.8,404.6 287.5,412.2 290.0,417.5 C292.5,422.8 295.8,429.3 300.0,434.0 C304.2,438.7 310.0,442.4 315.0,445.5 C320.0,448.6 324.3,450.9 330.0,452.5 C335.7,454.1 342.8,455.0 349.0,455.0 C355.2,455.0 361.3,453.2 367.5,452.5 C373.7,451.8 381.0,451.3 386.0,450.5 C391.0,449.7 395.6,448.0 397.5,447.5 L578.6,416 C578.1,418.7 576.5,427.0 575.8,432.0 C575.1,437.0 574.6,443.5 574.4,445.8 L386,475.8 C383.3,476.1 378.3,477.3 370.0,477.5 C361.7,477.7 346.4,478.4 336.0,477.0 C325.6,475.6 315.0,471.8 307.5,469.0 C300.0,466.2 295.4,462.8 291.0,460.0 C286.6,457.2 284.5,455.7 281.0,452.5 C277.5,449.3 272.9,444.3 270.0,441.0 C267.1,437.7 265.8,436.2 263.8,432.5 C261.7,428.8 258.5,421.0 257.5,418.8 Z"/></clipPath></defs>
<path d="M251,280 Q254,273 262.5,269.5 L300.0,252.5 L361.0,230.0 L386.0,221.0 L462.0,196.0 C463.9,197.5 468.2,201.4 473.5,205.0 C478.8,208.6 485.2,213.8 493.5,217.5 C501.8,221.2 514.3,225.2 523.5,227.5 C532.7,229.8 538.5,230.2 548.5,231.0 C558.5,231.8 577.7,232.2 583.5,232.5 L588.5,280.0 L591.0,306.0 L594.0,356.0 L592.0,370.0 C591.7,371.3 591.4,373.0 590.0,378.0 C588.6,383.0 585.4,393.7 583.5,400.0 C581.6,406.3 579.9,410.7 578.6,416.0 C577.3,421.3 576.5,427.0 575.8,432.0 C575.1,437.0 574.5,439.5 574.4,445.8 C574.3,452.1 574.7,464.8 575.0,470.0 C575.3,475.2 575.8,475.8 576.0,477.0 L386.0,490.5 L313.0,498.0 L272.5,453.0 L229.0,406.5 L201.0,378.0 L177.5,354.0 L207.5,340.0 C208.6,339.2 211.8,337.2 214.0,335.5 C216.2,333.8 218.2,332.5 221.0,329.5 C223.8,326.5 229.3,319.5 231.0,317.5 L251,280 Z" fill="#00b5bd"/>
<path d="M262,269.6 L300.0,252.5 L361.0,230.0 L386.0,221.0 L462.0,196.0 C463.9,197.5 468.2,201.4 473.5,205.0 C478.8,208.6 485.2,213.8 493.5,217.5 C501.8,221.2 514.3,225.2 523.5,227.5 C532.7,229.8 538.5,230.2 548.5,231.0 C558.5,231.8 577.7,232.2 583.5,232.5 L588.5,280.0 L591.0,306.0 L594.0,356.0 L412.5,385 C410.9,385.1 409.1,385.4 403.0,385.6 C396.9,385.8 383.6,386.6 376.0,386.2 C368.4,385.9 363.1,385.1 357.5,383.8 C351.9,382.4 347.1,380.3 342.5,378.0 C337.9,375.7 333.8,373.4 330.0,370.0 C326.2,366.6 322.7,360.9 320.0,357.5 C317.3,354.1 314.8,350.8 313.8,349.4 C312.5,346.7 309.2,339.2 306.0,333.0 C302.8,326.8 299.4,319.8 294.7,312.2 C290.0,304.6 283.1,294.6 277.7,287.6 C272.3,280.6 264.9,272.9 262.3,270.0 Z" fill="url(#topf)"/>
<path d="M231,317.5 L250.7,280 C253.9,283.8 262.9,295.1 268.3,302.7 C273.7,310.3 279.0,318.5 283.4,325.4 C287.8,332.3 291.8,338.8 294.7,344.2 C297.6,349.6 299.6,355.3 300.6,357.5 L285,402 C284.0,400.0 281.5,395.0 279.0,390.0 C276.5,385.0 273.8,378.7 270.0,372.0 C266.2,365.3 260.8,357.0 256.0,350.0 C251.2,343.0 245.2,335.4 241.0,330.0 C236.8,324.6 232.7,319.6 231.0,317.5 Z" fill="#00c1c9"/>
<path d="M207.5,340 C208.6,339.2 211.8,337.2 214.0,335.5 C216.2,333.8 218.2,332.5 221.0,329.5 C223.8,326.5 229.3,319.5 231.0,317.5 C232.7,319.6 236.8,324.6 241.0,330.0 C245.2,335.4 251.2,343.0 256.0,350.0 C260.8,357.0 266.2,365.3 270.0,372.0 C273.8,378.7 276.5,385.0 279.0,390.0 C281.5,395.0 284.0,400.0 285.0,402.0 C282.8,403.8 276.5,410.0 272.0,413.0 C267.5,416.0 260.3,418.8 258.0,420.0 C256.4,416.3 253.2,408.8 251.0,404.0 C248.8,399.2 247.0,395.2 244.0,390.0 C241.0,384.8 237.0,378.8 233.0,373.0 C229.0,367.2 224.2,360.5 220.0,355.0 C215.8,349.5 209.6,342.5 207.5,340.0 Z" fill="url(#bandB)"/>
<path d="M415,397.5 L592,370 C591.7,371.3 591.4,373.0 590.0,378.0 C588.6,383.0 585.4,393.7 583.5,400.0 C581.6,406.3 579.4,413.3 578.6,416.0 L397.5,447.5 Z" fill="#00c8d0"/>
<path d="M258,420 C260.3,418.8 267.5,416.0 272.0,413.0 C276.5,410.0 282.8,403.8 285.0,402.0 C285.8,404.6 287.5,412.2 290.0,417.5 C292.5,422.8 295.8,429.3 300.0,434.0 C304.2,438.7 310.0,442.4 315.0,445.5 C320.0,448.6 324.3,450.9 330.0,452.5 C335.7,454.1 342.8,455.0 349.0,455.0 C355.2,455.0 361.3,453.2 367.5,452.5 C373.7,451.8 381.0,451.3 386.0,450.5 C391.0,449.7 395.6,448.0 397.5,447.5 L578.6,416 C578.1,418.7 576.5,427.0 575.8,432.0 C575.1,437.0 574.6,443.5 574.4,445.8 L386,475.8 C383.3,476.1 378.3,477.3 370.0,477.5 C361.7,477.7 346.4,478.4 336.0,477.0 C325.6,475.6 315.0,471.8 307.5,469.0 C300.0,466.2 295.4,462.8 291.0,460.0 C286.6,457.2 284.5,455.7 281.0,452.5 C277.5,449.3 272.9,444.3 270.0,441.0 C267.1,437.7 265.8,436.2 263.8,432.5 C261.7,428.8 258.5,421.0 257.5,418.8 Z" fill="url(#tube)"/>
<g clip-path="url(#tubeclip)"><ellipse cx="360" cy="457" rx="48" ry="12" fill="url(#hl)"/></g>
<path d="M300.6,357.5 L313.75,349.4 C314.8,350.8 317.3,354.1 320.0,357.5 C322.7,360.9 326.2,366.6 330.0,370.0 C333.8,373.4 337.9,375.7 342.5,378.0 C347.1,380.3 351.9,382.4 357.5,383.8 C363.1,385.1 368.4,385.9 376.0,386.2 C383.6,386.6 396.9,385.8 403.0,385.6 C409.1,385.4 410.9,385.1 412.5,385.0 L415,397.5 L397.5,447.5 C395.6,448.0 391.0,449.7 386.0,450.5 C381.0,451.3 373.7,451.8 367.5,452.5 C361.3,453.2 355.2,455.0 349.0,455.0 C342.8,455.0 335.7,454.1 330.0,452.5 C324.3,450.9 320.0,448.6 315.0,445.5 C310.0,442.4 304.2,438.7 300.0,434.0 C295.8,429.3 292.5,422.8 290.0,417.5 C287.5,412.2 285.8,404.6 285.0,402.0 Z" fill="url(#holeg)"/>
<path d="M250.7,280 Q254,273.5 262,269.6 C264.9,272.9 272.3,280.6 277.7,287.6 C283.1,294.6 290.0,304.6 294.7,312.2 C299.4,319.8 302.8,326.8 306.0,333.0 C309.2,339.2 312.5,346.7 313.8,349.4 L300.6,357.5 C299.6,355.3 297.6,349.6 294.7,344.2 C291.8,338.8 287.8,332.3 283.4,325.4 C279.0,318.5 273.7,310.3 268.3,302.7 C262.9,295.1 253.9,283.8 251.0,280.0 Z" fill="#f5e920"/>
<path d="M258.0,276.0 C260.3,279.0 267.0,287.0 272.0,294.0 C277.0,301.0 283.3,310.5 288.0,318.0 C292.7,325.5 297.1,333.5 300.0,339.0 C302.9,344.5 304.6,349.0 305.5,351.0" fill="none" stroke="#fcf436" stroke-width="4" stroke-linecap="round" opacity="0.25"/>
<path d="M412.5,385 L594,356 L592,370 L415,397.5 Z" fill="url(#yel2)"/>
<g fill="none" stroke="#6a5048" stroke-width="0.55"><path d="M251,280 Q254,273 262.5,269.5 L300.0,252.5 L361.0,230.0 L386.0,221.0 L462.0,196.0 C463.9,197.5 468.2,201.4 473.5,205.0 C478.8,208.6 485.2,213.8 493.5,217.5 C501.8,221.2 514.3,225.2 523.5,227.5 C532.7,229.8 538.5,230.2 548.5,231.0 C558.5,231.8 577.7,232.2 583.5,232.5 L588.5,280.0 L591.0,306.0 L594.0,356.0 L592.0,370.0 C591.7,371.3 591.4,373.0 590.0,378.0 C588.6,383.0 585.4,393.7 583.5,400.0 C581.6,406.3 579.9,410.7 578.6,416.0 C577.3,421.3 576.5,427.0 575.8,432.0 C575.1,437.0 574.5,439.5 574.4,445.8 C574.3,452.1 574.7,464.8 575.0,470.0 C575.3,475.2 575.8,475.8 576.0,477.0 L386.0,490.5 L313.0,498.0 L272.5,453.0 L229.0,406.5 L201.0,378.0 L177.5,354.0 L207.5,340.0 C208.6,339.2 211.8,337.2 214.0,335.5 C216.2,333.8 218.2,332.5 221.0,329.5 C223.8,326.5 229.3,319.5 231.0,317.5 L251,280 Z"/><path d="M300.6,357.5 L313.75,349.4 C314.8,350.8 317.3,354.1 320.0,357.5 C322.7,360.9 326.2,366.6 330.0,370.0 C333.8,373.4 337.9,375.7 342.5,378.0 C347.1,380.3 351.9,382.4 357.5,383.8 C363.1,385.1 368.4,385.9 376.0,386.2 C383.6,386.6 396.9,385.8 403.0,385.6 C409.1,385.4 410.9,385.1 412.5,385.0 L415,397.5 L397.5,447.5 C395.6,448.0 391.0,449.7 386.0,450.5 C381.0,451.3 373.7,451.8 367.5,452.5 C361.3,453.2 355.2,455.0 349.0,455.0 C342.8,455.0 335.7,454.1 330.0,452.5 C324.3,450.9 320.0,448.6 315.0,445.5 C310.0,442.4 304.2,438.7 300.0,434.0 C295.8,429.3 292.5,422.8 290.0,417.5 C287.5,412.2 285.8,404.6 285.0,402.0 Z"/><path d="M262.3,270.0 C264.9,272.9 272.3,280.6 277.7,287.6 C283.1,294.6 290.0,304.6 294.7,312.2 C299.4,319.8 302.8,326.8 306.0,333.0 C309.2,339.2 312.5,346.7 313.8,349.4"/><path d="M251.0,280.0 C253.9,283.8 262.9,295.1 268.3,302.7 C273.7,310.3 279.0,318.5 283.4,325.4 C287.8,332.3 291.8,338.8 294.7,344.2 C297.6,349.6 299.6,355.3 300.6,357.5"/><path d="M412.5,385 L594,356 M415,397.5 L592,370"/><path d="M325.6,243.5 C327.2,245.2 331.6,249.4 335.3,253.9 C339.0,258.4 343.9,265.1 347.8,270.6 C351.7,276.2 355.7,282.1 358.9,287.2 C362.1,292.3 364.9,297.3 367.2,301.1 C369.5,304.9 370.8,307.5 372.8,310.0 C374.9,312.5 376.7,314.1 379.5,316.3 C382.3,318.5 386.4,321.1 389.8,323.0 C393.2,324.9 396.6,326.1 400.2,327.4 C403.8,328.6 407.8,329.9 411.3,330.5 C414.8,331.1 417.4,331.2 421.0,331.2 C424.6,331.2 428.2,331.0 433.0,330.5 C437.8,330.0 436.2,330.2 450.0,328.3 C463.8,326.4 492.5,322.5 516.0,319.3 C539.5,316.1 578.5,310.7 591.0,309.0"/><path d="M231.0,317.5 C232.7,319.6 236.8,324.6 241.0,330.0 C245.2,335.4 251.2,343.0 256.0,350.0 C260.8,357.0 266.2,365.3 270.0,372.0 C273.8,378.7 276.5,385.0 279.0,390.0 C281.5,395.0 284.0,400.0 285.0,402.0"/><path d="M207.5,340.0 C209.6,342.5 215.8,349.5 220.0,355.0 C224.2,360.5 229.0,367.2 233.0,373.0 C237.0,378.8 241.0,384.8 244.0,390.0 C247.0,395.2 248.8,399.2 251.0,404.0 C253.2,408.8 255.4,414.0 257.5,418.8 C259.6,423.5 261.7,428.8 263.8,432.5 C265.8,436.2 267.1,437.7 270.0,441.0 C272.9,444.3 277.5,449.3 281.0,452.5 C284.5,455.7 286.6,457.2 291.0,460.0 C295.4,462.8 300.0,466.2 307.5,469.0 C315.0,471.8 325.6,475.6 336.0,477.0 C346.4,478.4 361.7,477.7 370.0,477.5 C378.3,477.3 383.3,476.1 386.0,475.8 L574.4,445.8"/><path d="M285.0,402.0 C282.8,403.8 276.5,410.0 272.0,413.0 C267.5,416.0 260.3,418.8 258.0,420.0"/><path d="M260,437.5 L265,434"/><path d="M281,460 L286,457.5"/><path d="M397.5,447.5 L578.6,416"/><path d="M397.5,447.5 L403.5,473"/></g>
<path d="M300.6,358.0 C301.8,360.2 304.9,366.9 307.5,371.0 C310.1,375.1 312.7,379.2 316.0,382.5 C319.3,385.8 323.1,388.3 327.5,391.0 C331.9,393.7 336.9,396.8 342.5,398.8 C348.1,400.7 354.3,402.2 361.0,402.8 C367.7,403.3 375.5,402.6 382.5,402.0 C389.5,401.4 397.8,399.8 403.0,399.0 C408.2,398.2 411.8,397.8 413.5,397.5" fill="none" stroke="#0a0a0a" stroke-width="1.3"/>
<g>
<path d="M589.5,231 L576,222.5" stroke="#20c020" stroke-width="1.4"/>
<path d="M573.5,220.8 L580.5,223.2 L577.6,226.8 Z" fill="#20c020"/>
<path d="M589.5,231 L599.5,205" stroke="#1a20e0" stroke-width="1.5"/>
<path d="M601.3,200.5 L598.6,211.5 L594.6,209.6 Z" fill="#1a20e0"/>
<path d="M589.5,231 L610,236.5" stroke="#e01010" stroke-width="1.5"/>
<path d="M616,238 L607.5,234.3 L606.5,238.8 Z" fill="#e01010"/>
<circle cx="589.5" cy="231.2" r="3.2" fill="#f0e020"/>
<circle cx="588.8" cy="230.2" r="1.2" fill="#ffff90"/>
<path d="M601,191 h4.5 l-4.5,5 h4.5" stroke="#2020e0" stroke-width="0.9" fill="none"/>
<path d="M568.5,216 l2.5,3 l2.5,-3 M571,219 v3" stroke="#20d020" stroke-width="0.9" fill="none"/>
<path d="M620.5,237.5 l5,5.5 M625.5,237.5 l-5,5.5" stroke="#e02020" stroke-width="0.9" fill="none"/>
</g></svg>
</body></html>
